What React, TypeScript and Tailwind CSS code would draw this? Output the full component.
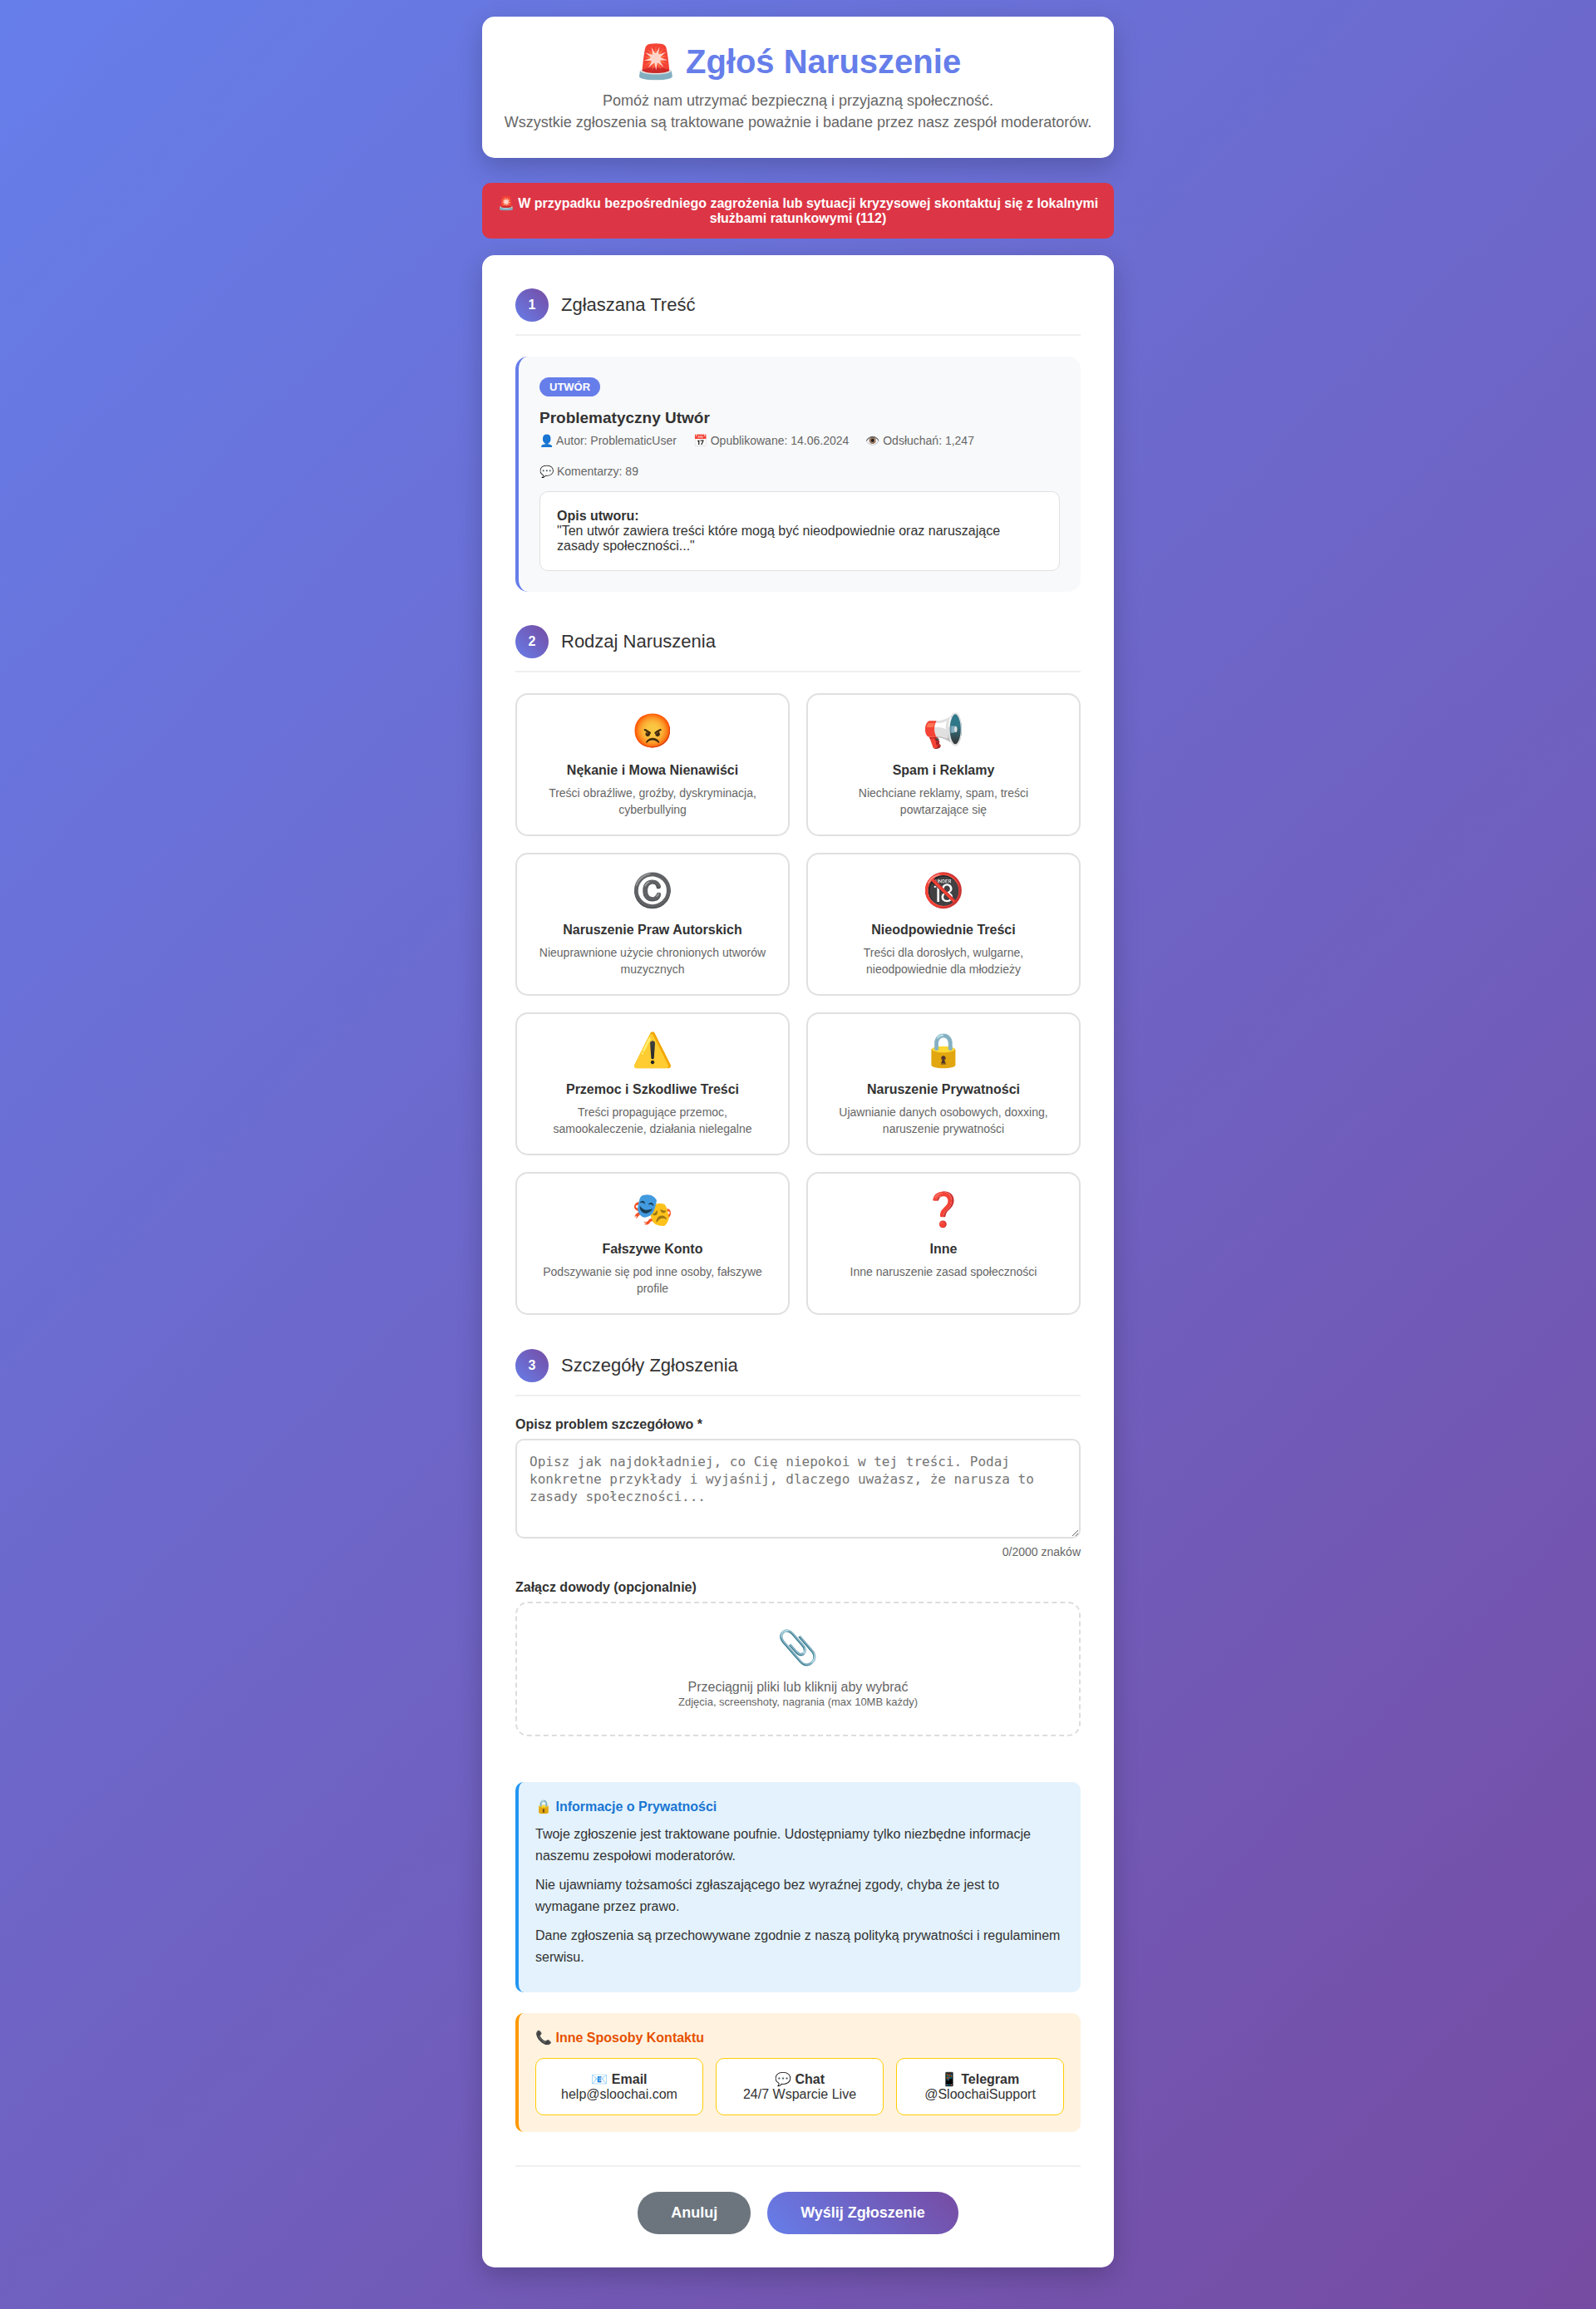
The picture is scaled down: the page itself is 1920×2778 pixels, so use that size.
import { useState } from "react";

const categories = [
  { icon: "😡", title: "Nękanie i Mowa Nienawiści", text: "Treści obraźliwe, groźby, dyskryminacja, cyberbullying" },
  { icon: "📢", title: "Spam i Reklamy", text: "Niechciane reklamy, spam, treści powtarzające się" },
  { icon: "©️", title: "Naruszenie Praw Autorskich", text: "Nieuprawnione użycie chronionych utworów muzycznych" },
  { icon: "🔞", title: "Nieodpowiednie Treści", text: "Treści dla dorosłych, wulgarne, nieodpowiednie dla młodzieży" },
  { icon: "⚠️", title: "Przemoc i Szkodliwe Treści", text: "Treści propagujące przemoc, samookaleczenie, działania nielegalne" },
  { icon: "🔒", title: "Naruszenie Prywatności", text: "Ujawnianie danych osobowych, doxxing, naruszenie prywatności" },
  { icon: "🎭", title: "Fałszywe Konto", text: "Podszywanie się pod inne osoby, fałszywe profile" },
  { icon: "❓", title: "Inne", text: "Inne naruszenie zasad społeczności" },
];

const meta = [
  "👤 Autor: ProblematicUser",
  "📅 Opublikowane: 14.06.2024",
  "👁️ Odsłuchań: 1,247",
  "💬 Komentarzy: 89",
];

const privacy = [
  "Twoje zgłoszenie jest traktowane poufnie. Udostępniamy tylko niezbędne informacje naszemu zespołowi moderatorów.",
  "Nie ujawniamy tożsamości zgłaszającego bez wyraźnej zgody, chyba że jest to wymagane przez prawo.",
  "Dane zgłoszenia są przechowywane zgodnie z naszą polityką prywatności i regulaminem serwisu.",
];

const contacts = [
  { name: "📧 Email", value: "help@sloochai.com" },
  { name: "💬 Chat", value: "24/7 Wsparcie Live" },
  { name: "📱 Telegram", value: "@SloochaiSupport" },
];

function SectionTitle({ number, title }: { number: number; title: string }) {
  return (
    <div className="mb-[25px] flex items-center gap-[15px] border-b-2 border-[#f0f0f0] pb-[15px]">
      <span className="flex size-10 shrink-0 items-center justify-center rounded-full bg-[linear-gradient(45deg,#667eea,#764ba2)] font-bold text-white">
        {number}
      </span>
      <h2 className="text-[22px]">{title}</h2>
    </div>
  );
}

export default function App() {
  const [category, setCategory] = useState<string | null>(null);
  const [text, setText] = useState("");

  return (
    <div className="min-h-screen bg-[linear-gradient(135deg,#667eea_0%,#764ba2_100%)] font-['Liberation_Sans',Arial,sans-serif] text-base leading-[normal] text-[#333]">
      <div className="mx-auto max-w-[800px] px-5 pt-5 pb-[50px]">
        <header className="mb-[30px] rounded-[15px] bg-white px-5 py-[30px] text-center shadow-[0_10px_30px_rgba(0,0,0,0.2)]">
          <h1 className="mb-[10px] text-[40px] leading-[48px] font-bold text-[#667eea]">🚨 Zgłoś Naruszenie</h1>
          <p className="text-lg leading-[26px] text-[#666]">
            Pomóż nam utrzymać bezpieczną i przyjazną społeczność.
            <br />
            Wszystkie zgłoszenia są traktowane poważnie i badane przez nasz zespół moderatorów.
          </p>
        </header>

        <div role="alert" className="mb-5 rounded-[10px] bg-[#dc3545] p-[15px] text-center font-bold text-white">
          🚨 W przypadku bezpośredniego zagrożenia lub sytuacji kryzysowej skontaktuj się z lokalnymi służbami ratunkowymi (112)
        </div>

        <form
          className="rounded-[15px] bg-white p-10 shadow-[0_10px_30px_rgba(0,0,0,0.2)]"
          onSubmit={(event) => event.preventDefault()}
        >
          <section className="mb-10">
            <SectionTitle number={1} title="Zgłaszana Treść" />
            <div className="rounded-[15px] border-l-4 border-[#667eea] bg-[#f8f9fa] p-[25px]">
              <div className="mb-[15px] flex">
                <span className="rounded-[15px] bg-[#667eea] px-3 py-1 text-[13px] leading-[15px] font-bold text-white">UTWÓR</span>
              </div>
              <h3 className="mb-2 text-[19px] leading-[22px] font-bold">Problematyczny Utwór</h3>
              <ul className="mb-[15px] flex flex-wrap gap-5 text-sm leading-[17px] text-[#666]">
                {meta.map((item) => (
                  <li key={item}>{item}</li>
                ))}
              </ul>
              <div className="rounded-[10px] border border-[#e0e0e0] bg-white p-5">
                <strong>Opis utworu:</strong>
                <br />
                "Ten utwór zawiera treści które mogą być nieodpowiednie oraz naruszające zasady społeczności..."
              </div>
            </div>
          </section>

          <section className="mb-[41px]">
            <SectionTitle number={2} title="Rodzaj Naruszenia" />
            <div className="grid grid-cols-1 gap-5 sm:grid-cols-2">
              {categories.map((item) => (
                <button
                  key={item.title}
                  type="button"
                  aria-pressed={category === item.title}
                  onClick={() => setCategory(item.title)}
                  className="flex cursor-pointer flex-col items-center rounded-[15px] border-2 border-[#e0e0e0] bg-white p-5 text-center hover:border-[#667eea] aria-pressed:border-[#667eea]"
                >
                  <span className="mb-[15px] text-[40px] leading-[47px]">{item.icon}</span>
                  <span className="mb-2 font-bold">{item.title}</span>
                  <span className="text-sm leading-5 text-[#666]">{item.text}</span>
                </button>
              ))}
            </div>
          </section>

          <section className="mb-[55px]">
            <SectionTitle number={3} title="Szczegóły Zgłoszenia" />
            <div className="mb-[25px]">
              <label htmlFor="details" className="mb-2 block font-bold">
                Opisz problem szczegółowo *
              </label>
              <textarea
                id="details"
                maxLength={2000}
                value={text}
                onChange={(event) => setText(event.target.value)}
                placeholder="Opisz jak najdokładniej, co Cię niepokoi w tej treści. Podaj konkretne przykłady i wyjaśnij, dlaczego uważasz, że narusza to zasady społeczności..."
                className="block h-[120px] w-full resize-y rounded-[10px] border-2 border-[#e0e0e0] p-[15px] font-[monospace] leading-[21px] outline-none placeholder:text-[#757575] focus:border-[#667eea]"
              />
              <div className="mt-2 text-right text-sm leading-[17px] text-[#666]">{text.length}/2000 znaków</div>
            </div>
            <div>
              <span id="files-title" className="mb-2 block font-bold">
                Załącz dowody (opcjonalnie)
              </span>
              <label className="flex cursor-pointer flex-col items-center rounded-[15px] border-2 border-dashed border-[#ddd] p-[30px] text-center text-[#666] hover:border-[#667eea]">
                <input type="file" multiple aria-labelledby="files-title" className="sr-only" />
                <span className="mb-[15px] text-[40px] leading-[47px]">📎</span>
                <span>Przeciągnij pliki lub kliknij aby wybrać</span>
                <span className="text-[13px] leading-[18px]">Zdjęcia, screenshoty, nagrania (max 10MB każdy)</span>
              </label>
            </div>
          </section>

          <section className="mb-[25px] rounded-[10px] border-l-4 border-[#2196f3] bg-[#e3f2fd] p-5">
            <h4 className="mb-[10px] leading-[20px] font-bold text-[#1976d2]">🔒 Informacje o Prywatności</h4>
            {privacy.map((item) => (
              <p key={item} className="mb-[9px] leading-[26px]">
                {item}
              </p>
            ))}
          </section>

          <section className="rounded-[10px] border-l-4 border-[#ff9800] bg-[#fff3e0] p-5">
            <h4 className="mb-[15px] leading-[19px] font-bold text-[#e65100]">📞 Inne Sposoby Kontaktu</h4>
            <div className="grid grid-cols-1 gap-[15px] sm:grid-cols-3">
              {contacts.map((item) => (
                <div key={item.name} className="rounded-[10px] border border-[#ffcc02] bg-white p-[15px] text-center">
                  <strong>{item.name}</strong>
                  <br />
                  {item.value}
                </div>
              ))}
            </div>
          </section>

          <div className="mt-10 flex flex-wrap justify-center gap-5 border-t-2 border-[#f0f0f0] pt-[30px]">
            <button type="button" className="cursor-pointer rounded-[25px] bg-[#6c757d] px-10 py-[15px] text-lg leading-[21px] font-bold text-white">
              Anuluj
            </button>
            <button
              type="submit"
              className="cursor-pointer rounded-[25px] bg-[linear-gradient(45deg,#667eea,#764ba2)] px-10 py-[15px] text-lg leading-[21px] font-bold text-white"
            >
              Wyślij Zgłoszenie
            </button>
          </div>
        </form>
      </div>
    </div>
  );
}
